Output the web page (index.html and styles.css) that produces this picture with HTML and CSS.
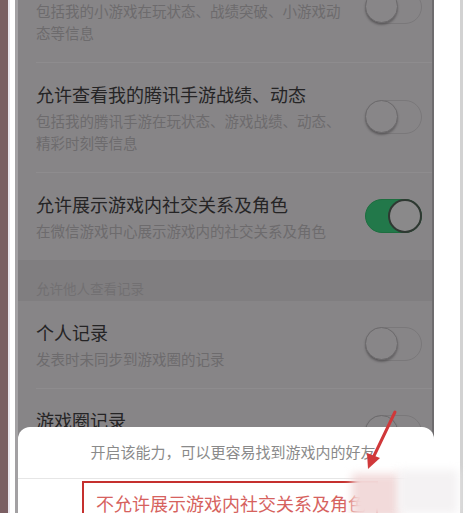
FILE: index.html
```html
<!DOCTYPE html>
<html lang="zh-CN">
<head>
<meta charset="utf-8">
<link rel="stylesheet" href="styles.css">
</head>
<body>
<div class="frame">
  <div class="rim"></div>
  <div class="bezel-l"></div>
  <div class="screen">
    <div class="list">
      <div class="row">
        <div class="text">
          <div class="title">允许查看我的小游戏动态</div>
          <div class="sub">包括我的小游戏在玩状态、战绩突破、小游戏动态等信息</div>
        </div>
        <div class="toggle"><span class="knob"></span></div>
      </div>
      <div class="row">
        <div class="text">
          <div class="title">允许查看我的腾讯手游战绩、动态</div>
          <div class="sub">包括我的腾讯手游在玩状态、游戏战绩、动态、精彩时刻等信息</div>
        </div>
        <div class="toggle"><span class="knob"></span></div>
      </div>
      <div class="row">
        <div class="text">
          <div class="title">允许展示游戏内社交关系及角色</div>
          <div class="sub">在微信游戏中心展示游戏内的社交关系及角色</div>
        </div>
        <div class="toggle on"><span class="knob"></span></div>
      </div>
    </div>
    <div class="section-head">允许他人查看记录</div>
    <div class="list">
      <div class="row">
        <div class="text">
          <div class="title">个人记录</div>
          <div class="sub">发表时未同步到游戏圈的记录</div>
        </div>
        <div class="toggle"><span class="knob"></span></div>
      </div>
      <div class="row row-last">
        <div class="text">
          <div class="title">游戏圈记录</div>
          <div class="sub">发表到游戏圈的记录</div>
        </div>
        <div class="toggle"><span class="knob"></span></div>
      </div>
    </div>
  </div>
  <div class="bezel-r"></div>

  <div class="sheet">
    <div class="sheet-msg">开启该能力，可以更容易找到游戏内的好友</div>
    <div class="sheet-btn">不允许展示游戏内社交关系及角色</div>
  </div>

  <svg class="arrow" width="50" height="70" viewBox="0 0 50 70">
    <line x1="40" y1="7" x2="17" y2="55" stroke="#d0383a" stroke-width="3" stroke-linecap="round"/>
    <polygon points="13,64 25,53 12,48" fill="#d0383a"/>
  </svg>
  <div class="smudge"></div>
  <div class="smudge2"></div>
</div>
</body>
</html>
```

FILE: styles.css
```css
html, body {
  margin: 0;
  padding: 0;
  background: #ffffff;
}
body {
  width: 465px;
  height: 513px;
  overflow: hidden;
  font-family: "Noto Sans CJK SC", "Noto Sans", sans-serif;
}
.frame {
  position: relative;
  display: flex;
  width: 465px;
  height: 513px;
  overflow: hidden;
}
.rim {
  width: 8px;
  flex: none;
  background: #7b5f63;
}
.bezel-l {
  width: 5px;
  flex: none;
  background: #ffffff;
  border-left: 2px solid #ebe6ee;
  border-right: 3px solid #a3a1a3;
}
.screen {
  width: 414px;
  flex: none;
  background: #878587;
  border-right: 2px solid #6e6c6e;
  overflow: hidden;
}
.bezel-r {
  width: 26px;
  flex: none;
  background: #ffffff;
  border-right: 3px solid #d2d2d2;
}
.list:first-child {
  margin-top: -47px;
}
.row {
  display: flex;
  align-items: center;
  margin-left: 18px;
  padding: 16px 10px 18px 0;
}
.row + .row {
  border-top: 1px solid #8e8c8e;
}
.row-last {
  padding-top: 16px;
}
.text {
  width: 312px;
  flex: none;
}
.title {
  font-size: 18px;
  line-height: 30px;
  color: #252425;
  margin-bottom: 1px;
}
.sub {
  font-size: 14.5px;
  line-height: 22px;
  color: #6d6b6d;
}
.toggle {
  position: relative;
  margin-left: auto;
  width: 55px;
  height: 32px;
  border: 1px solid #7a787a;
  border-radius: 17px;
  flex: none;
}
.knob {
  position: absolute;
  left: -1px;
  top: -1px;
  width: 31px;
  height: 31px;
  border-radius: 50%;
  border: 1.5px solid #6c6a6c;
  box-shadow: 0 2px 2px rgba(60, 58, 60, 0.45);
  background: #888688;
}
.toggle.on {
  background: #22784a;
  border-color: #1d6e3f;
}
.toggle.on .knob {
  left: auto;
  right: -1px;
  border: 2px solid #2f3832;
  width: 30px;
  height: 30px;
  background: #8a898a;
  box-shadow: none;
}
.section-head {
  height: 22px;
  padding: 19px 0 0 18px;
  background: #807e80;
  font-size: 13.5px;
  line-height: 18px;
  color: #727072;
}
.sheet {
  position: absolute;
  left: 18px;
  top: 427px;
  width: 416px;
  height: 100px;
  background: #ffffff;
  border-radius: 12px 12px 0 0;
}
.sheet-msg {
  height: 37px;
  padding: 14px 0 0 14px;
  text-align: center;
  font-size: 15px;
  line-height: 22px;
  color: #8a8a8a;
  border-bottom: 1px solid #e6e6e6;
}
.sheet-btn {
  margin: 2px 0 0 64px;
  width: 280px;
  height: 40px;
  padding: 8px 0 0 12px;
  border: 2px solid #c5302e;
  font-size: 18px;
  line-height: 24px;
  color: #d6625e;
}
.arrow {
  position: absolute;
  left: 355px;
  top: 405px;
}
.smudge {
  position: absolute;
  left: 352px;
  top: 474px;
  width: 48px;
  height: 44px;
  background: #f2dada;
  filter: blur(4px);
}
.smudge2 {
  position: absolute;
  left: 398px;
  top: 470px;
  width: 60px;
  height: 44px;
  background: #f4f2f3;
  filter: blur(5px);
}
```
